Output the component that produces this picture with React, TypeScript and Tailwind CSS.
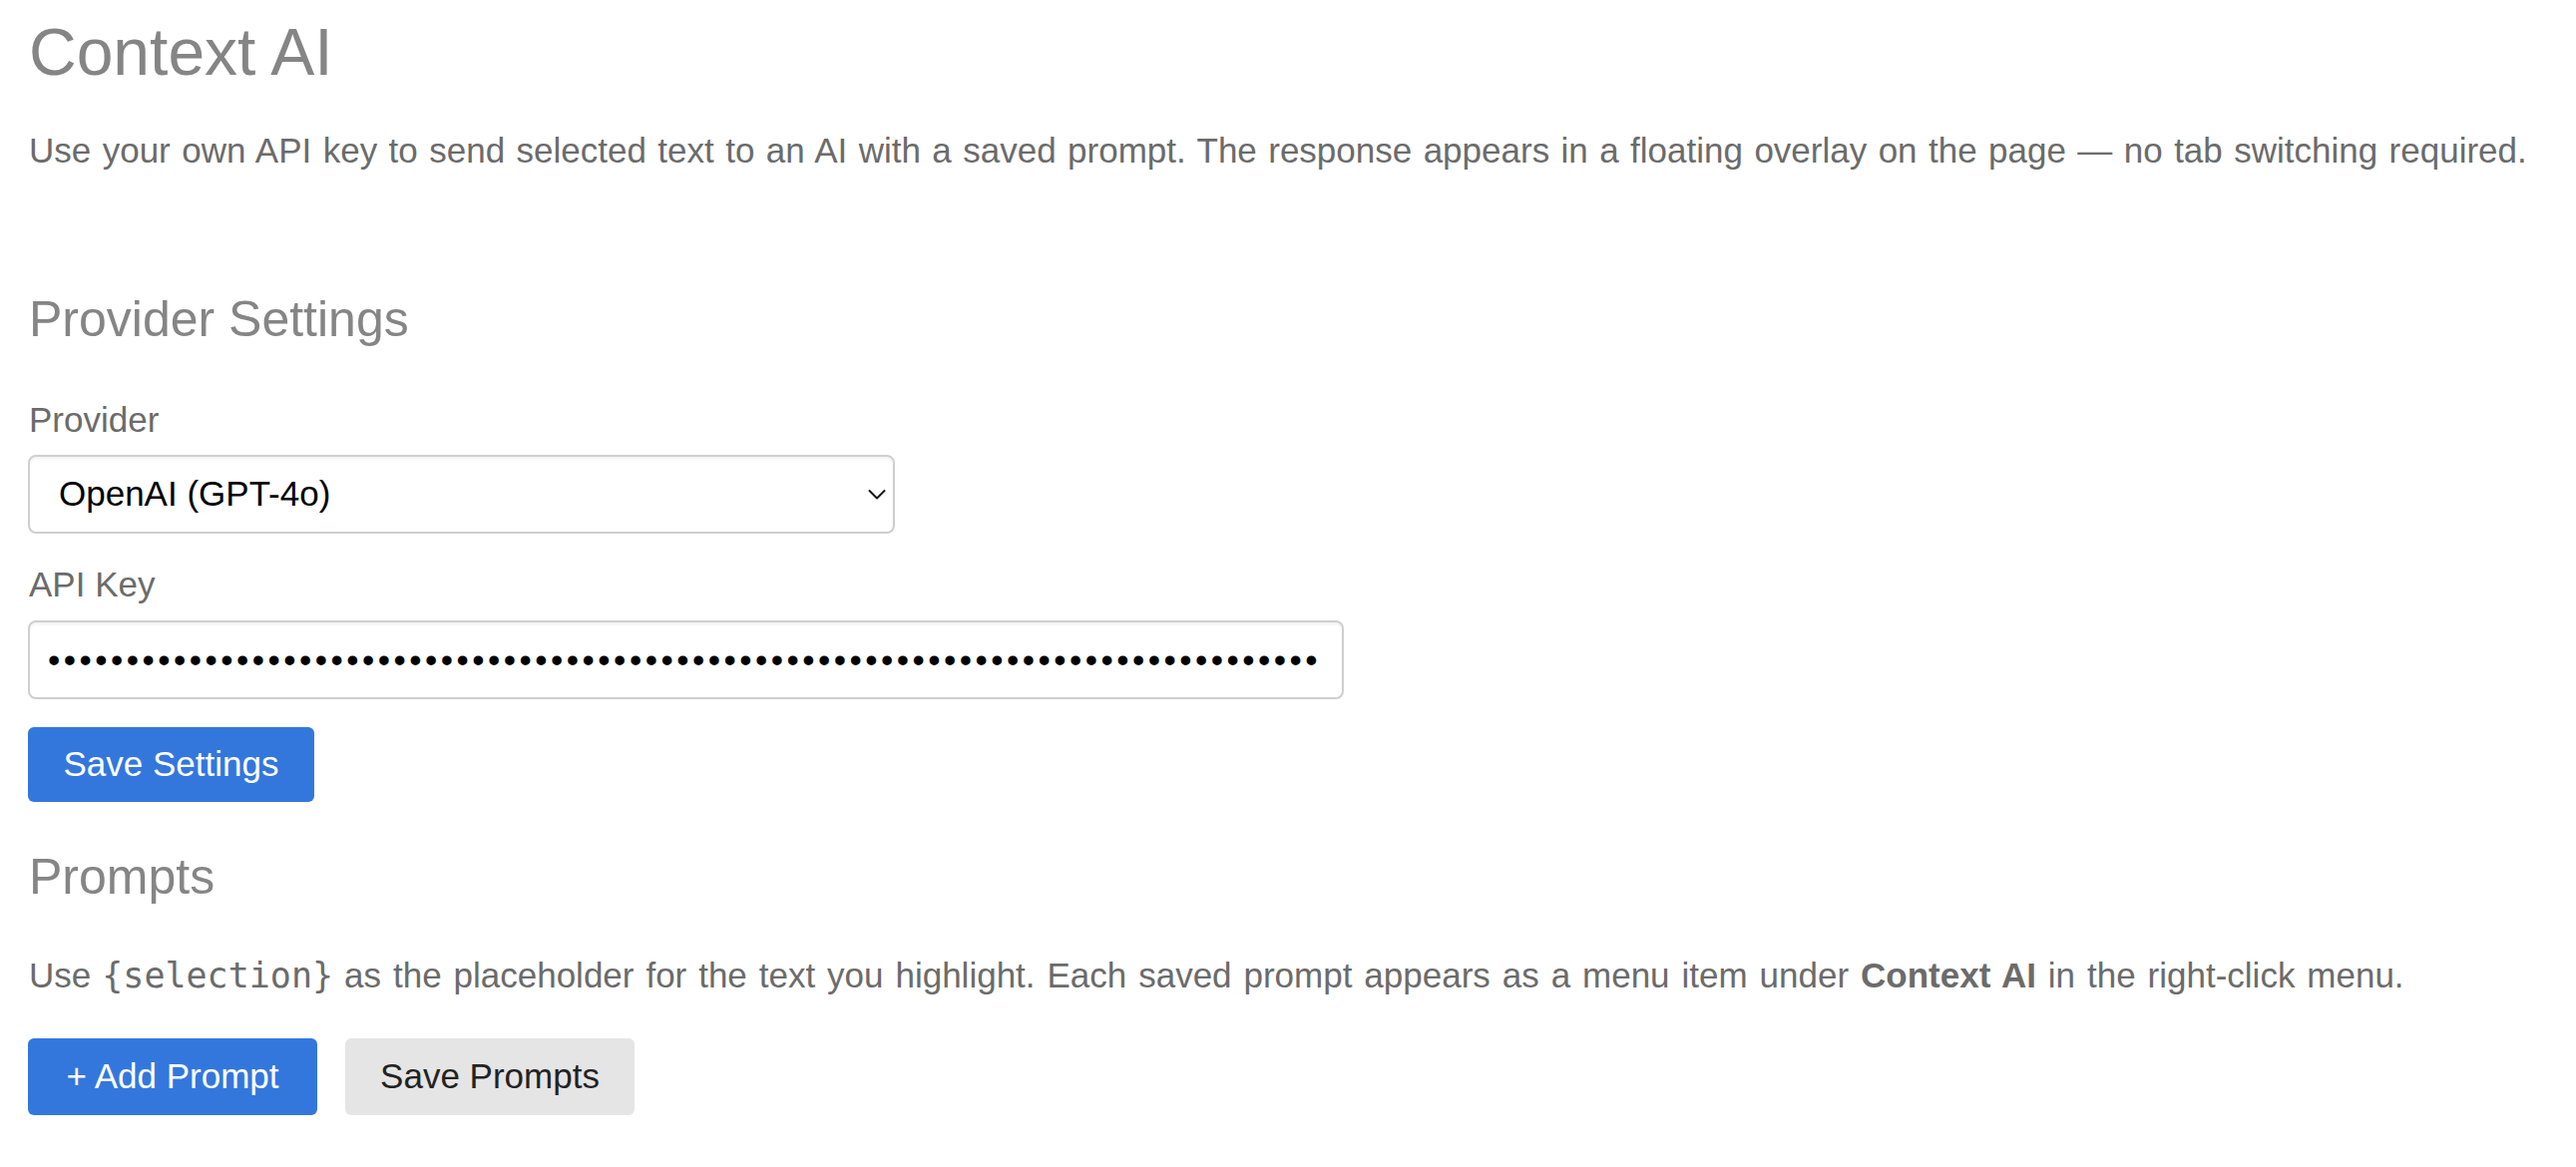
import { useState } from 'react';

const sans = 'font-["Liberation_Sans",Arial,sans-serif]';

function Label({ children, className = '' }: { children: React.ReactNode; className?: string }) {
  return <label className={`block text-[35px] leading-[35px] text-[#6b6b6b] ${className}`}>{children}</label>;
}

export default function App() {
  const [provider, setProvider] = useState('openai');
  const [apiKey, setApiKey] = useState('s'.repeat(81));

  return (
    <div className={`min-h-screen bg-white pl-[29px] pt-[19px] ${sans}`}>
      <h1 className="text-[66px] leading-[66px] font-normal text-[#858585]">Context AI</h1>
      <p className="mt-[48px] text-[35px] leading-[35px] text-[#6b6b6b] whitespace-nowrap [word-spacing:1.7px]">
        Use your own API key to send selected text to an AI with a saved prompt. The response appears in a floating
        overlay on the page — no tab switching required.
      </p>

      <h2 className="mt-[127px] text-[50px] leading-[50px] font-normal text-[#858585]">Provider Settings</h2>

      <Label className="mt-[58px]">Provider</Label>
      <div className="relative mt-[18px] w-[869px] -ml-px">
        <select
          value={provider}
          onChange={(e) => setProvider(e.target.value)}
          className="h-[79px] w-full appearance-none rounded-[8px] border-2 border-[#cfcfcf] bg-white pl-[29px] text-[35px] text-black outline-none shadow-[inset_0_2px_3px_rgba(0,0,0,0.06)]"
        >
          <option value="openai">OpenAI (GPT-4o)</option>
          <option value="anthropic">Anthropic (Claude)</option>
          <option value="gemini">Google (Gemini)</option>
        </select>
        <svg
          className="pointer-events-none absolute right-[9px] top-1/2 -translate-y-1/2"
          width="18"
          height="11"
          viewBox="0 0 18 11"
          fill="none"
        >
          <path d="M1.5 1.5 L9 9 L16.5 1.5" stroke="#111" strokeWidth="2" strokeLinecap="round" strokeLinejoin="round" />
        </svg>
      </div>

      <Label className="mt-[33px]">API Key</Label>
      <input
        type="password"
        value={apiKey}
        onChange={(e) => setApiKey(e.target.value)}
        className="mt-[19px] -ml-px block h-[79px] w-[1319px] rounded-[8px] border-2 border-[#cfcfcf] bg-white pl-[18px] text-[35px] tracking-[3.5px] text-black outline-none shadow-[inset_0_2px_3px_rgba(0,0,0,0.06)]"
      />

      <button className="mt-[28px] -ml-px block h-[75px] w-[287px] rounded-[6px] bg-[#3377dd] text-[35px] text-white">
        Save Settings
      </button>

      <h2 className="mt-[50px] text-[50px] leading-[50px] font-normal text-[#858585]">Prompts</h2>

      <p className="mt-[56px] text-[35px] leading-[35px] text-[#6b6b6b] whitespace-nowrap [word-spacing:2.2px]">
        Use<code className='ml-[11px] mr-[11px] font-["DejaVu_Sans_Mono",monospace] text-[35px] text-[#6b6b6b] [word-spacing:0]'>{'{selection}'}</code>as the
        placeholder for the text you highlight. Each saved prompt appears as a menu item under{' '}
        <strong className="font-bold">Context AI</strong> in the right-click menu.
      </p>

      <div className="mt-[45px] -ml-px flex gap-[28px]">
        <button className="h-[77px] w-[290px] rounded-[6px] bg-[#3377dd] text-[35px] text-white">+ Add Prompt</button>
        <button className="h-[77px] w-[290px] rounded-[6px] bg-[#e5e5e5] text-[35px] text-[#222]">Save Prompts</button>
      </div>
    </div>
  );
}
